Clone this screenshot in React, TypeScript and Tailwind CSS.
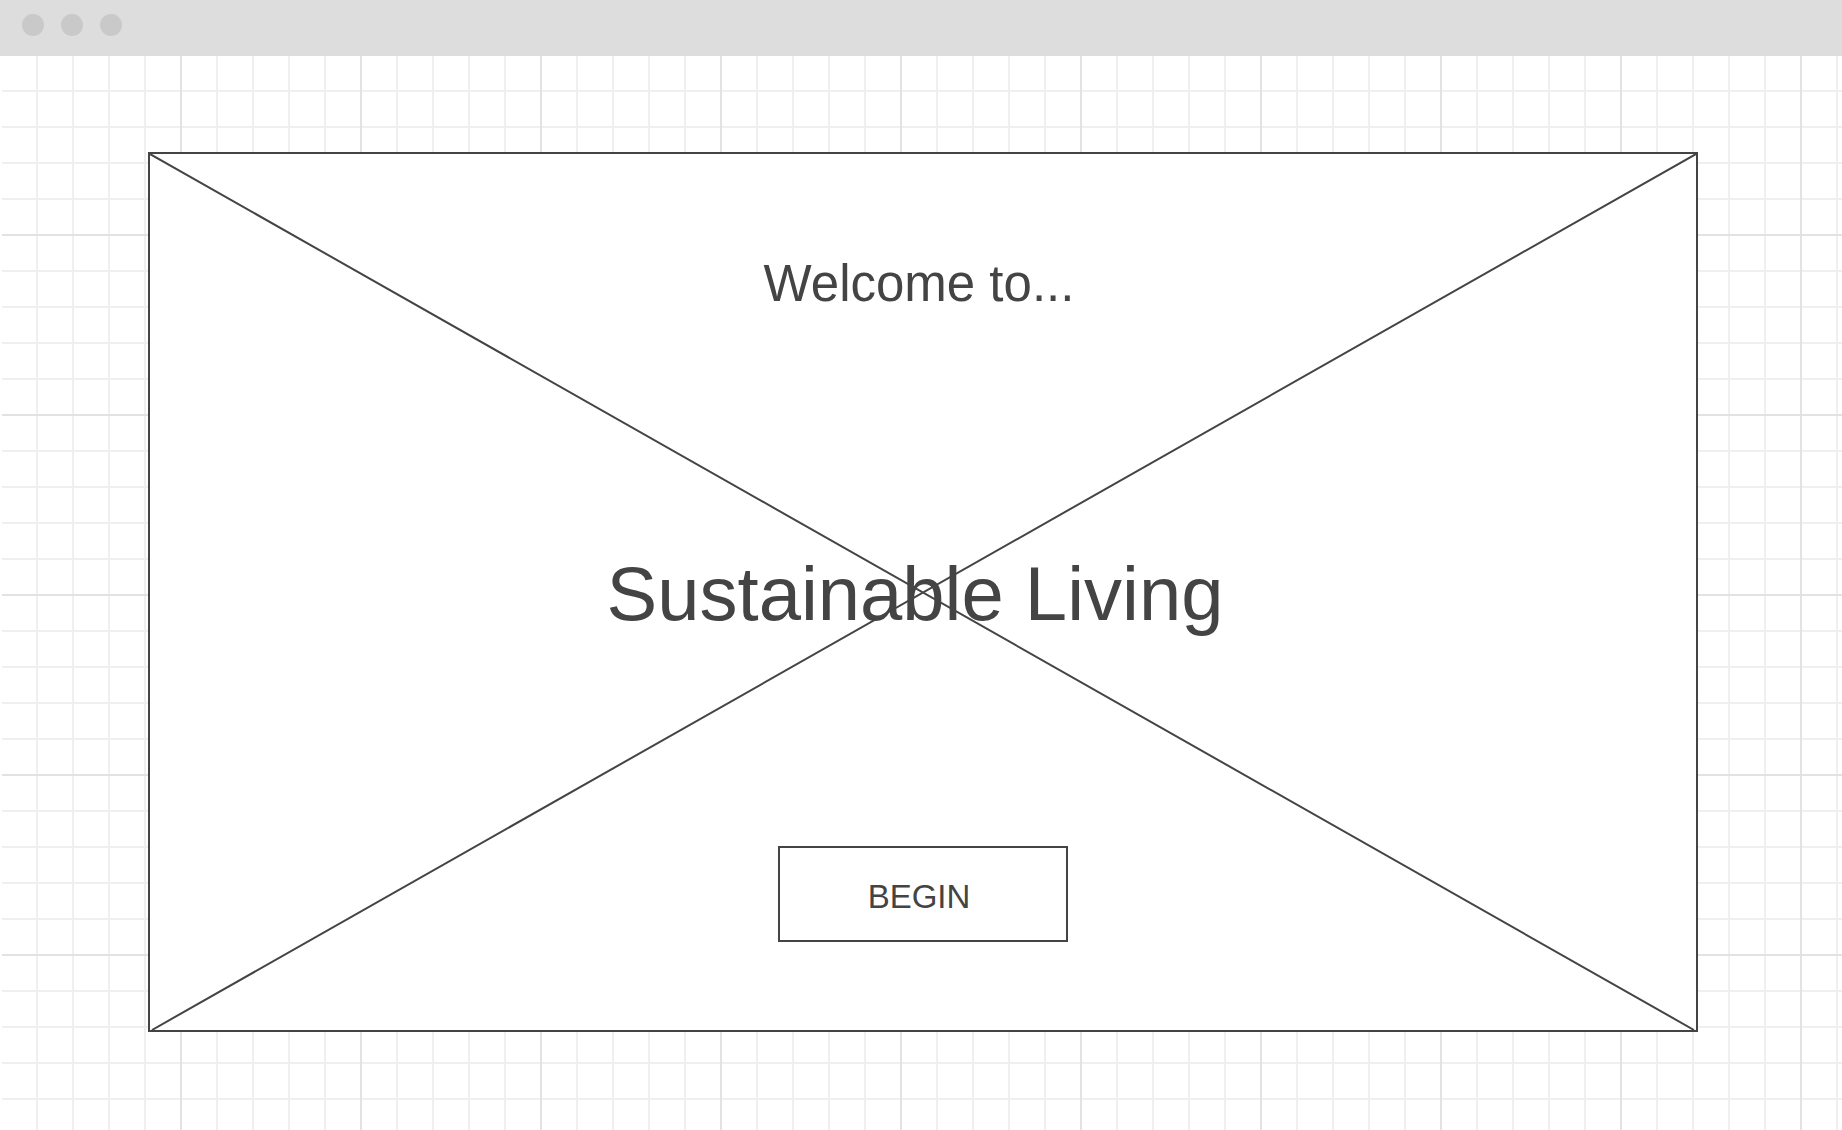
const gridLines =
  "bg-[repeating-linear-gradient(90deg,transparent_0_178px,#e2e2e2_178px_180px),repeating-linear-gradient(180deg,transparent_0_178px,#e2e2e2_178px_180px),repeating-linear-gradient(90deg,transparent_0_34px,#efefef_34px_36px),repeating-linear-gradient(180deg,transparent_0_34px,#efefef_34px_36px)]";

function TitleBar() {
  return (
    <header className="flex h-14 shrink-0 items-start gap-[17px] bg-[#dddddd] px-[22px] pt-[14px]">
      <span className="size-[22px] rounded-full bg-[#c9c9c9]" />
      <span className="size-[22px] rounded-full bg-[#c9c9c9]" />
      <span className="size-[22px] rounded-full bg-[#c9c9c9]" />
    </header>
  );
}

function Crossing() {
  return (
    <svg
      className="absolute inset-0 size-full"
      viewBox="0 0 1546 876"
      preserveAspectRatio="none"
      aria-hidden="true"
    >
      <path d="M0 0 1544 876M1546 0 2 876" stroke="#444" strokeWidth="2" fill="none" />
    </svg>
  );
}

export default function App() {
  return (
    <div className="flex min-h-screen flex-col bg-white font-['Liberation_Sans',Arial,sans-serif] text-[#444444]">
      <TitleBar />
      <main className={`ml-0.5 flex grow flex-col pt-24 pr-36 pb-[98px] pl-[146px] ${gridLines}`}>
        <section className="relative flex grow flex-col items-center border-2 border-[#444444] bg-white pt-[100px] pb-[88px]">
          <Crossing />
          <p className="relative mr-2 text-[51px] leading-[60px]">Welcome to...</p>
          <h1 className="relative my-auto mr-4 pt-7 text-[76px] leading-[88px]">Sustainable Living</h1>
          <button
            type="button"
            className="relative h-24 w-[290px] border-2 border-[#444444] bg-white pt-1.5 pr-2 text-[33px] leading-10"
          >
            BEGIN
          </button>
        </section>
      </main>
    </div>
  );
}
